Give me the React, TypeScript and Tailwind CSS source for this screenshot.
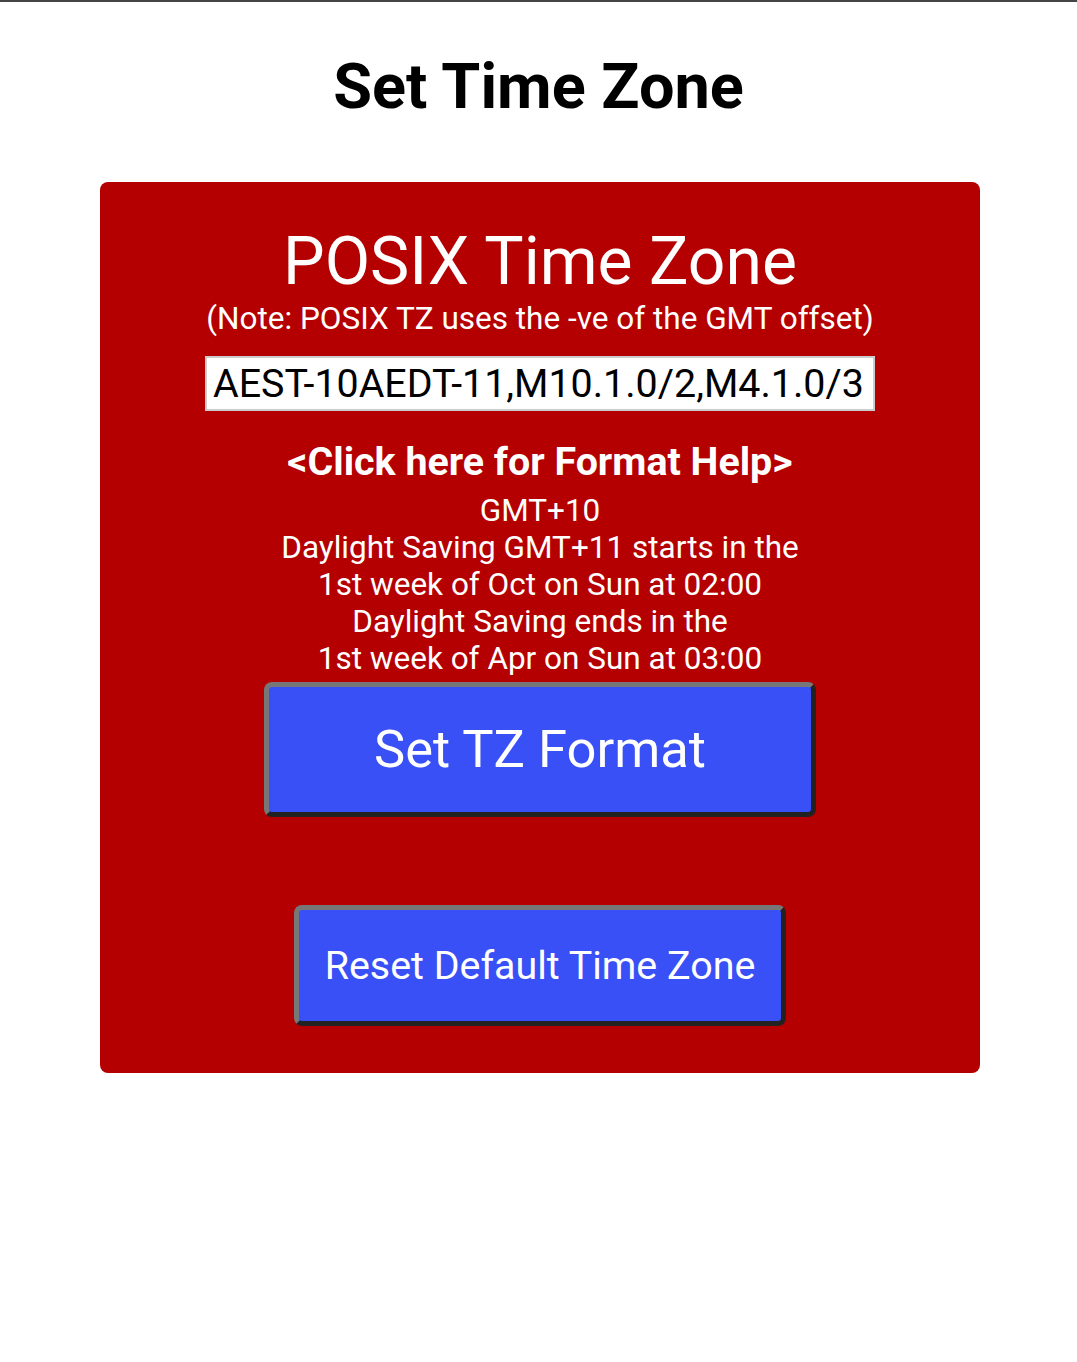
import React, { useState } from "react";

const info = [
  "GMT+10",
  "Daylight Saving GMT+11 starts in the",
  "1st week of Oct on Sun at 02:00",
  "Daylight Saving ends in the",
  "1st week of Apr on Sun at 03:00",
];

export default function App() {
  const [tz, setTz] = useState("AEST-10AEDT-11,M10.1.0/2,M4.1.0/3");

  return (
    <div className="min-h-screen bg-white border-t-2 border-[#444] font-['Roboto',sans-serif] text-black">
      <h1 className="mt-[47px] text-center text-[63px] leading-[75px] font-bold">Set Time Zone</h1>

      <div className="ml-[100px] mt-[58px] w-[880px] bg-[#b40000] rounded-lg text-white text-center flex flex-col items-center pt-[42px] pb-[47px]">
        <h2 className="text-[66px] leading-[75px] font-normal">POSIX Time Zone</h2>
        <p className="text-[31.5px] leading-[40px]">(Note: POSIX TZ uses the -ve of the GMT offset)</p>

        <input
          value={tz}
          onChange={(e) => setTz(e.target.value)}
          className="mt-[17px] w-[670px] h-[55px] bg-white text-black border-2 border-[#ccc] px-[6px] text-[39.4px] outline-none"
        />

        <a className="mt-[28px] text-[39.4px] leading-[46px] font-bold cursor-pointer">&lt;Click here for Format Help&gt;</a>

        <div className="mt-[7px] text-[31.5px] leading-[37px]">
          {info.map((l) => (
            <div key={l}>{l}</div>
          ))}
        </div>

        <button className="mt-[5px] w-[552px] h-[135px] bg-[#3850f5] text-white text-[52.5px] rounded-lg border-[5px] border-t-[#777] border-l-[#777] border-b-[#222] border-r-[#222]">
          Set TZ Format
        </button>

        <button className="mt-[88px] w-[492px] h-[121px] bg-[#3850f5] text-white text-[39.4px] rounded-lg border-[5px] border-t-[#777] border-l-[#777] border-b-[#222] border-r-[#222]">
          Reset Default Time Zone
        </button>
      </div>
    </div>
  );
}
